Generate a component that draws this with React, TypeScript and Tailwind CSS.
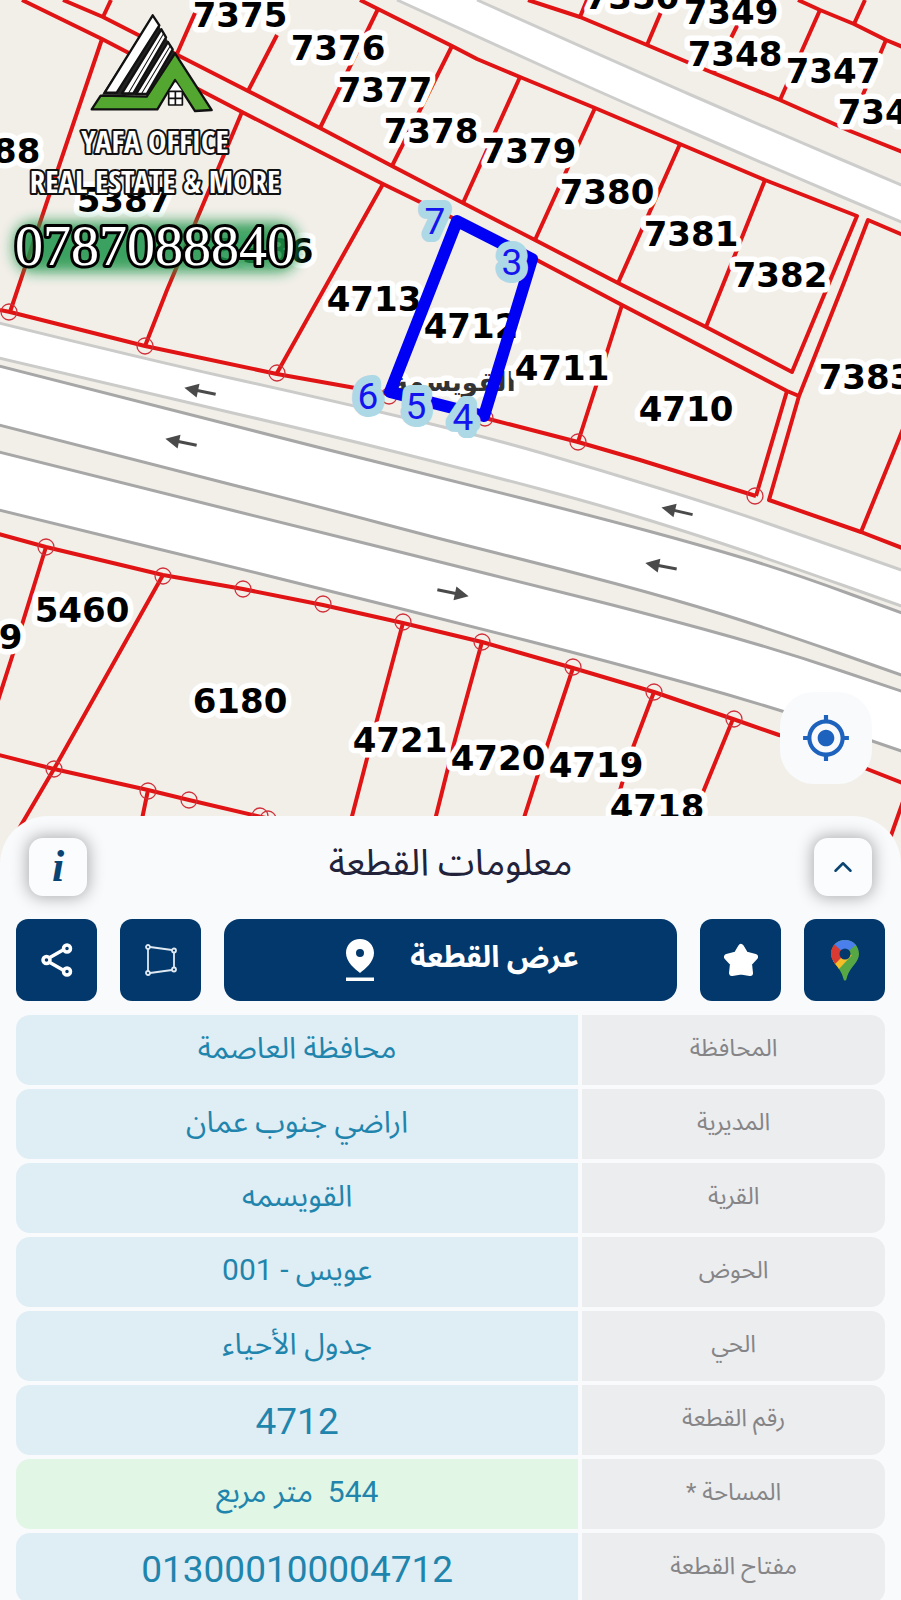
import { ChevronUp } from 'lucide-react'
import { MdMyLocation } from 'react-icons/md'

type Point = [number, number]

const labels: [string, number, number][] = [
  ['7375', 240, 27],
  ['7376', 338, 60],
  ['7377', 385, 102],
  ['7378', 431, 143],
  ['7379', 529, 163],
  ['7380', 607, 204],
  ['7381', 691, 246],
  ['7382', 780, 287],
  ['7383', 866, 389],
  ['7350', 632, 9],
  ['7349', 731, 24],
  ['7348', 735, 66],
  ['7347', 833, 83],
  ['7346', 885, 124],
  ['4713', 374, 311],
  ['4712', 471, 338],
  ['4711', 562, 380],
  ['4710', 686, 421],
  ['5388', -7, 163],
  ['5387', 124, 212],
  ['5386', 266, 263],
  ['5460', 82, 622],
  ['5459', -25, 649],
  ['6180', 240, 713],
  ['4721', 400, 752],
  ['4720', 498, 770],
  ['4719', 596, 777],
  ['4718', 657, 819],
]

const corners: [string, number, number][] = [
  ['7', 435, 234],
  ['3', 512, 275],
  ['6', 368, 409],
  ['5', 416, 419],
  ['4', 463, 430],
]

const nodes: Point[] = [
  [9, 312], [145, 346], [277, 373], [389, 396], [485, 418], [578, 442], [755, 496],
  [46, 547], [163, 576], [243, 589], [323, 604], [403, 622], [482, 642], [573, 667], [654, 692], [734, 719],
  [54, 769], [148, 791], [189, 800], [260, 816], [268, 819],
]

const parcels = [
  // north side of the alley
  'M63 0L103 17L248 91L320 128L392 166L463 203L535 240L618 283L706 327L792 372L857 216L765 180L680 144L595 108L520 77L477 59L452 46L378 9L360 0',
  'M103 17L111 0M176 56L195 13M248 91L277 35M320 128L378 9M392 166L452 46M463 203L520 77M535 240L595 108M618 283L680 144M706 327L765 180',
  // south side of the alley
  'M22 0L102 39L242 112L383 184L457 220L533 258L622 305L787 391L799 396',
  'M102 39L60 163L10 312M242 112L167 290L145 346M383 184L277 373M622 305L607 352L578 442M787 391L756 496',
  'M0 310L10 312L145 346L277 374L389 394L485 418L578 442L640 460L756 496',
  'M910 238L868 220L845 280L799 396L769 500L861 532L910 551M861 532L905 424',
  // top right block
  'M528 0L580 17L647 45L706 70L780 100L850 131L910 155M798 0L820 10L854 24L886 40L910 50',
  'M580 17L587 0M647 45L664 5M714 72L741 18M780 100L820 10M854 24L865 0M886 40L848 130',
  // south of the highway
  'M-5 533L46 547L163 575L243 589L323 605L403 623L482 642L573 668L654 692L733 719L779 735L867 769L910 786',
  'M46 547L12 657L-5 710M163 575L54 769L10 844M403 623L377 720L350 824M482 642L455 740L434 824M573 668L548 743L522 824M654 692L632 750L610 824M733 719L690 824M905 796L888 844',
  'M-5 754L54 769L148 790L189 800L270 819M148 790L141 824',
]

// each road is its upper and its lower kerb, both from left to right
const roads: { color: string; top: Point[]; bottom: Point[] }[] = [
  {
    color: '#cdcecc',
    top: [[477, 0], [620, 64], [760, 125], [920, 193]],
    bottom: [[397, 0], [500, 47], [620, 101], [760, 162], [920, 230]],
  },
  {
    color: '#cbccca',
    top: [[-5, 322], [145, 359], [320, 398], [483, 436], [600, 470], [720, 507], [810, 538], [910, 573]],
    bottom: [[-5, 357], [150, 394], [320, 433], [480, 473], [600, 505], [700, 536], [780, 563], [910, 609]],
  },
  {
    color: '#a6a7a6',
    top: [[-5, 365], [150, 404], [320, 448], [450, 480], [600, 518], [700, 545], [790, 572], [910, 616]],
    bottom: [[-5, 424], [150, 464], [320, 507], [440, 539], [557, 568], [673, 599], [773, 630], [910, 678]],
  },
  {
    color: '#a6a7a6',
    top: [[-5, 451], [150, 490], [320, 532], [440, 562], [540, 587], [633, 610], [773, 648], [910, 694]],
    bottom: [[-5, 509], [100, 535], [200, 559], [330, 591], [450, 621], [607, 661], [773, 707], [910, 754]],
  },
]

const arrows: [number, number, number][] = [
  [200, 391, 12],
  [181, 442, 12],
  [677, 511, 13],
  [661, 566, 11],
  [453, 593, 192],
]

const rows = [
  { label: 'المحافظة', value: 'محافظة العاصمة' },
  { label: 'المديرية', value: 'اراضي جنوب عمان' },
  { label: 'القرية', value: 'القويسمه' },
  { label: 'الحوض', value: 'عويس - 001' },
  { label: 'الحي', value: 'جدول الأحياء' },
  { label: 'رقم القطعة', value: '4712', large: true },
  { label: 'المساحة *', value: '544  متر مربع', highlight: true },
  { label: 'مفتاح القطعة', value: '013000100004712', large: true },
]

// rounds the bends by running quadratic curves through the segment midpoints
function smooth(points: Point[]) {
  const last = points[points.length - 1]
  const bends = points.slice(1, -1).map(([x, y], i) => {
    const [nx, ny] = points[i + 2]
    return `Q${x} ${y} ${(x + nx) / 2} ${(y + ny) / 2}`
  })
  return `${points[0].join(' ')}${bends.join('')}L${last.join(' ')}`
}

function Roads() {
  return (
    <g>
      {roads.map((road, i) => (
        <path key={i} d={`M${smooth(road.top)}L${smooth([...road.bottom].reverse())}Z`} fill="#fff" />
      ))}
      {roads.map((road, i) => (
        <path
          key={i}
          d={`M${smooth(road.top)}M${smooth(road.bottom)}`}
          fill="none"
          stroke={road.color}
          strokeWidth="3"
        />
      ))}
    </g>
  )
}

function OfficeLogo() {
  return (
    <g>
      <g transform="scale(.3334)" stroke="#111" strokeWidth="7" strokeLinejoin="round">
        <path d="M458 46L525 160L440 286L306 284Z" fill="#222" stroke="none" />
        <path d="M458 46L478 76L350 278L314 278Z" fill="#fff" />
        <path d="M484 88L498 112L400 280L366 280Z" fill="#fff" />
        <path d="M504 126L518 148L440 282L408 282Z" fill="#fff" />
        <path d="M492 98L384 282M512 136L424 282" strokeWidth="3" />
        <path d="M302 287L440 290L525 160L635 330L585 333L525 240L472 328L275 328Z" fill="#53a630" />
        <path d="M527 246L548 276H506Z" fill="#fff" stroke="none" />
        <path d="M506 274H547V315H506Z" fill="#fff" strokeWidth="5" />
        <path d="M526 274V315M506 295H547" strokeWidth="5" />
      </g>
      <g
        fontFamily="'Open Sans Condensed', 'Liberation Sans Narrow', 'DejaVu Sans Condensed', sans-serif"
        fill="#fff"
        stroke="#111"
        strokeWidth="4"
        strokeLinejoin="round"
        paintOrder="stroke"
        textAnchor="middle"
      >
        <text x="155" y="153" fontSize="31">YAFA OFFICE</text>
        <text x="155" y="193" fontSize="31">REAL ESTATE &amp; MORE</text>
      </g>
      <rect x="14" y="222" width="284" height="50" rx="20" fill="#1f9448" opacity="0.85" filter="url(#glow)" />
      <text
        x="155"
        y="265"
        fontSize="56"
        fontFamily="'Liberation Serif', serif"
        fill="#fff"
        stroke="#000"
        strokeWidth="6"
        strokeLinejoin="round"
        paintOrder="stroke"
        textAnchor="middle"
      >
        0787088840
      </text>
    </g>
  )
}

function ParcelMap() {
  return (
    <svg viewBox="0 0 901 864" className="block h-auto w-full bg-[#f2efe9]" role="img" aria-label="خريطة القطع">
      <defs>
        <filter id="glow" x="-20%" y="-50%" width="140%" height="200%">
          <feGaussianBlur stdDeviation="7" />
        </filter>
      </defs>
      <Roads />
      <g fill="none" stroke="#e01414" strokeWidth="4" strokeLinejoin="round">
        {parcels.map((d) => (
          <path key={d} d={d} />
        ))}
      </g>
      <g fill="none" stroke="#d0303a" strokeWidth="1.3">
        {nodes.map(([x, y]) => (
          <circle key={`${x}-${y}`} cx={x} cy={y} r="8" />
        ))}
      </g>
      {arrows.map(([x, y, angle]) => (
        <g key={`${x}-${y}`} transform={`translate(${x} ${y}) rotate(${angle})`} fill="#4a4a4a">
          <path d="M-16 0L-2 -7V7Z" />
          <path d="M-4 -1.5H16V1.5H-4Z" />
        </g>
      ))}
      <g stroke="#fff" strokeWidth="11" strokeLinejoin="round" paintOrder="stroke" textAnchor="middle">
        <text x="454" y="391" fontSize="26" fontWeight="700" fontFamily="'DejaVu Sans', sans-serif" fill="#333">
          القويسمة
        </text>
        {labels.map(([text, x, y]) => (
          <text key={text} x={x} y={y} fontSize="34" fontWeight="700" fontFamily="'DejaVu Sans', sans-serif" fill="#000">
            {text}
          </text>
        ))}
      </g>
      <path d="M457 221L532 259L484 416L390 392Z" fill="none" stroke="#0000f5" strokeWidth="12" strokeLinejoin="round" />
      <g fontSize="37" fontFamily="Roboto, sans-serif" textAnchor="middle" strokeLinejoin="round">
        {corners.map(([text, x, y]) => (
          <text key={text} x={x} y={y} fill="#1414ee" stroke="#add8e6" strokeWidth="16" paintOrder="stroke">
            {text}
          </text>
        ))}
      </g>
      <OfficeLogo />
    </svg>
  )
}

function ShareIcon() {
  return (
    <svg viewBox="0 0 32 34" className="h-[34px] w-8" fill="none" stroke="#fff" strokeWidth="3.5" aria-hidden="true">
      <path d="M8 15L22 7M8 19L22 27" />
      <circle cx="5.5" cy="17" r="3.5" />
      <circle cx="26" cy="5.5" r="3.5" />
      <circle cx="26" cy="28.5" r="3.5" />
    </svg>
  )
}

function ShapeIcon() {
  return (
    <svg viewBox="0 0 32 32" className="size-8" fill="none" stroke="#dfe9f2" strokeWidth="1.8" aria-hidden="true">
      <path d="M3 5V27M5 3L27 6M29 9V23M5 29L27 26" />
      <circle cx="3" cy="3" r="2" />
      <circle cx="29" cy="6.5" r="2" />
      <circle cx="29" cy="25.5" r="2" />
      <circle cx="3" cy="29" r="2" />
    </svg>
  )
}

function PinIcon() {
  return (
    <svg viewBox="0 0 28 42" className="h-[42px] w-7" fill="#fff" aria-hidden="true">
      <path fillRule="evenodd" d="M14 0C6 0 0 6 0 14C0 23 9 30 14 34C19 30 28 23 28 14C28 6 22 0 14 0ZM14 10A4 4 0 1 1 14 18A4 4 0 1 1 14 10Z" />
      <path d="M0 38.5H28V42H0Z" />
    </svg>
  )
}

function StarIcon() {
  return (
    <svg viewBox="0 0 34 34" className="size-[34px]" fill="#fff" stroke="#fff" strokeWidth="6" strokeLinejoin="round" aria-hidden="true">
      <path d="M17 4L21.5 11.5L31 14L25 20.5L26 30L17 28.5L8 30L9 20.5L3 14L12.5 11.5Z" />
    </svg>
  )
}

function GoogleMapsIcon() {
  return (
    <svg viewBox="0 0 28 41" className="h-[41px] w-7" aria-hidden="true">
      <clipPath id="pin">
        <path d="M14 0C6 0 0 6 0 14C0 18 2 21 5 25C9 30 11 33 12.5 39C13 41 15 41 15.5 39C17 33 19 30 23 25C26 21 28 18 28 14C28 6 22 0 14 0Z" />
      </clipPath>
      <g clipPath="url(#pin)">
        <path d="M0 0H28V41H0Z" fill="#57a845" />
        <path d="M14 14L2 18V26L7 30L21 15Z" fill="#f5bd28" />
        <path d="M0 4L14 14L26 4V0H0Z" fill="#4b80ec" />
        <path d="M-2 5L4 5L14 14L3 25L-2 20Z" fill="#d93a32" />
      </g>
      <circle cx="14" cy="14" r="5.5" fill="#02386b" />
    </svg>
  )
}

export default function App() {
  const square =
    'flex size-[58px] items-center justify-center rounded-[14px] bg-[#fbfcfe] text-[#0a4473] shadow-[0_0_16px_2px_rgba(0,0,0,0.3)]'
  const action = 'flex h-[82px] w-[81px] shrink-0 items-center justify-center rounded-xl bg-[#02386b] text-white'

  return (
    <main className="flex h-screen flex-col overflow-hidden bg-[#f8fafc] font-['Roboto','Noto_Sans_Arabic','Noto_Sans','DejaVu_Sans',sans-serif]">
      <div className="relative shrink-0">
        <ParcelMap />
        <button
          aria-label="موقعي"
          className="absolute right-[29px] bottom-20 flex size-[92px] items-center justify-center rounded-[34px] bg-[#f8fafc] text-[#1d62bd]"
        >
          <MdMyLocation size={50} />
        </button>
      </div>

      <section className="relative -mt-12 shrink-0 rounded-t-[48px] bg-[#f8fafc]">
        <header className="flex items-start justify-between px-[29px] pt-[22px]">
          <button aria-label="معلومات" className={square}>
            <span className="font-['Liberation_Serif',serif] text-[44px] leading-none font-bold italic">i</span>
          </button>
          <h1 dir="rtl" className="text-[37px] leading-[50px] text-[#22223a]">
            معلومات القطعة
          </h1>
          <button aria-label="طي" className={square}>
            <ChevronUp size={30} strokeWidth={2} />
          </button>
        </header>

        <div className="flex gap-[23px] px-4 pt-[23px]">
          <button aria-label="مشاركة" className={action}>
            <ShareIcon />
          </button>
          <button aria-label="حدود القطعة" className={action}>
            <ShapeIcon />
          </button>
          <button className="flex h-[82px] flex-1 items-center justify-center gap-9 rounded-2xl bg-[#02386b] pl-6 text-[30px] font-bold text-white">
            <PinIcon />
            <span dir="rtl" className="pb-2">
              عرض القطعة
            </span>
          </button>
          <button aria-label="المفضلة" className={action}>
            <StarIcon />
          </button>
          <button aria-label="خرائط جوجل" className={action}>
            <GoogleMapsIcon />
          </button>
        </div>

        <div className="px-3 pt-[10px]">
          <table dir="rtl" className="w-full table-fixed border-separate border-spacing-1 text-center">
            <tbody>
              {rows.map((row) => (
                <tr key={row.label} className="h-[70px]">
                  <th
                    scope="row"
                    className="w-[35%] rounded-r-[14px] bg-[#ecedef] p-0 pb-1 text-[24px] leading-9 font-normal text-[#858588]"
                  >
                    {row.label}
                  </th>
                  <td
                    className={`rounded-l-[14px] leading-9 whitespace-pre text-[#1f85ad] ${
                      row.large ? 'p-0 pt-1 text-[37px]' : 'p-0 pb-1 text-[30px]'
                    } ${row.highlight ? 'bg-[#e1f6e5]' : 'bg-[#dfedf5]'}`}
                  >
                    {row.value}
                  </td>
                </tr>
              ))}
            </tbody>
          </table>
        </div>
      </section>
    </main>
  )
}
